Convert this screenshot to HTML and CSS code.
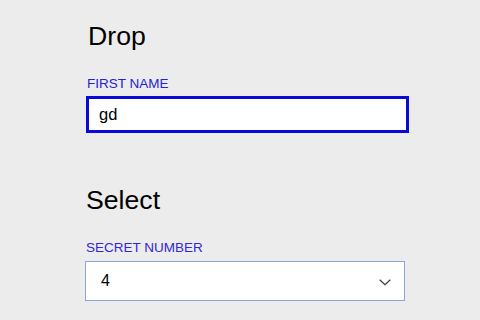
FILE: index.html
```html
<!DOCTYPE html>
<html>
<head>
<meta charset="utf-8">
<link rel="stylesheet" href="styles.css">
</head>
<body>
<main class="page">
  <section class="drop">
    <h2 class="drop-title">Drop</h2>
    <label class="field-label" for="first">FIRST NAME</label>
    <input class="text-input" id="first" type="text" value="gd">
  </section>
  <section class="select-section">
    <h2 class="select-title">Select</h2>
    <div class="field-label select-label">SECRET NUMBER</div>
    <div class="select-box">
      <span class="select-value">4</span>
      <svg class="chevron" width="12" height="7" viewBox="0 0 12 7"><path d="M0.7 0.8 L6 5.8 L11.3 0.8" fill="none" stroke="#3a3a3a" stroke-width="1.2"/></svg>
    </div>
  </section>
</main>
</body>
</html>
```
FILE: styles.css
```css
html, body {
  margin: 0;
  padding: 0;
  background: #ececec;
}
body {
  font-family: "Liberation Sans", Arial, sans-serif;
  color: #000;
}
.page {
  padding: 21px 0 0 85px;
  display: flex;
  flex-direction: column;
}
.drop {
  display: flex;
  flex-direction: column;
  align-items: flex-start;
  padding-left: 1px;
}
.drop-title,
.select-title {
  margin: 0;
  font-size: 26.67px;
  line-height: 30px;
  font-weight: normal;
}
.drop-title {
  margin-left: 2px;
}
.field-label {
  display: block;
  font-size: 13.5px;
  line-height: 16px;
  color: #2323d6;
  margin-top: 25px;
  margin-left: 1px;
}
.text-input {
  box-sizing: border-box;
  width: 323px;
  height: 37px;
  margin: 4px 0 0 0;
  border: 3px solid #0a0ad8;
  background: #fff;
  padding: 0 0 0 10px;
  font-family: "Liberation Sans", Arial, sans-serif;
  font-size: 16.5px;
  color: #000;
  outline: none;
}
.select-section {
  display: flex;
  flex-direction: column;
  align-items: flex-start;
  margin-top: 52px;
}
.select-title {
  margin-left: 1px;
}
.select-label {
  margin-top: 25px;
  margin-left: 1px;
  color: #3127d8;
}
.select-box {
  box-sizing: border-box;
  width: 320px;
  height: 40px;
  margin-top: 5px;
  border: 1px solid #8aa6da;
  background: #fff;
  display: flex;
  align-items: center;
  justify-content: space-between;
  padding: 0 13px 0 15px;
  font-size: 16px;
}
.select-value {
  line-height: 18px;
}
.chevron {
  display: block;
  margin-top: 3px;
}
```
